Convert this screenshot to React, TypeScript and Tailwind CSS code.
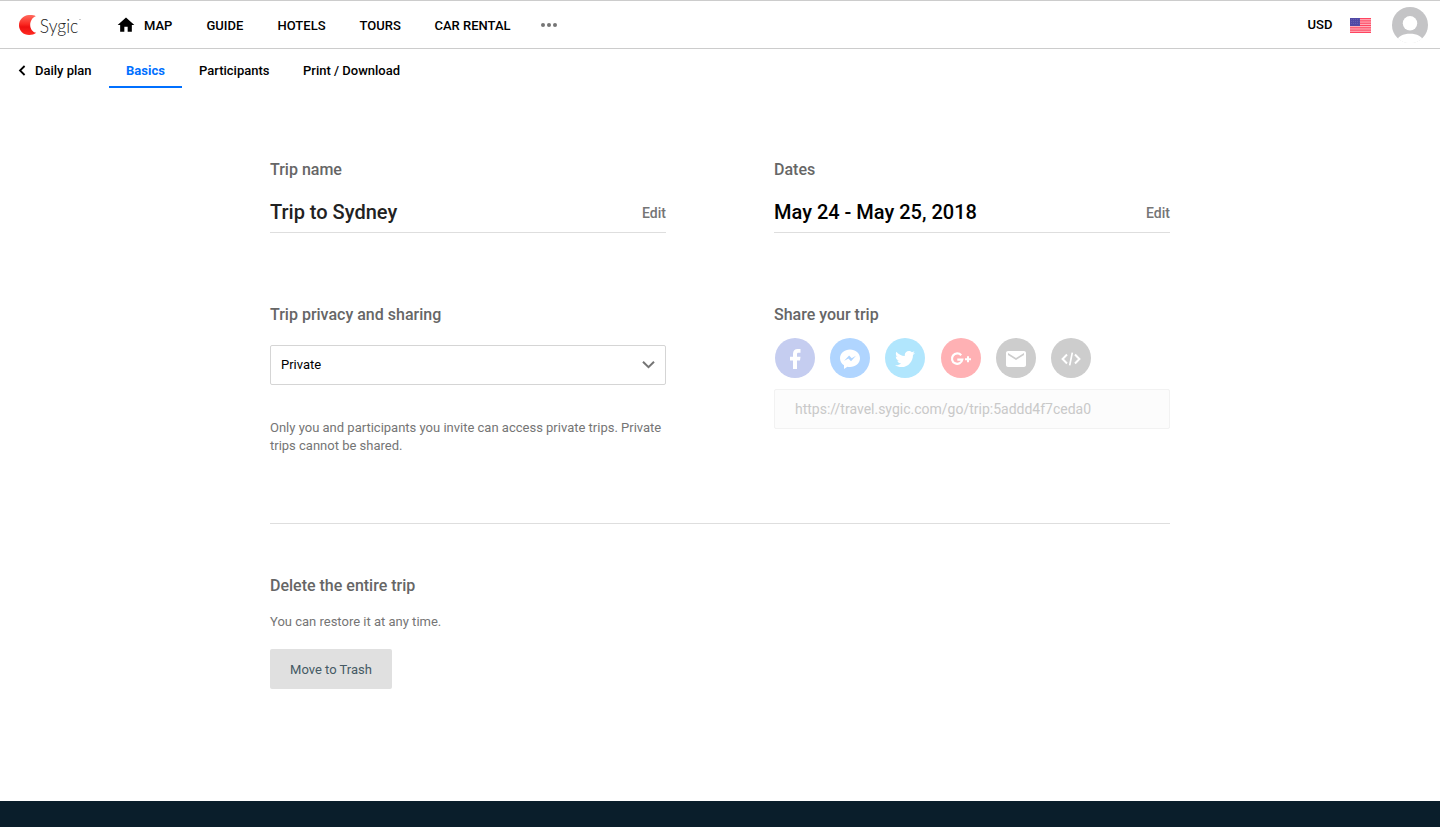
import React from "react";
import { MdHome, MdEmail } from "react-icons/md";
import { FaTwitter } from "react-icons/fa";

const NAV = [
  { label: "GUIDE", width: "w-[37px]" },
  { label: "HOTELS", width: "w-[48px]" },
  { label: "TOURS", width: "w-[41px]" },
  { label: "CAR RENTAL", width: "w-[77px]" },
];

function Logo() {
  return (
    <svg className="h-[28px] w-[66px] shrink-0" viewBox="0 0 66 28">
      <defs>
        <linearGradient id="moon" x1="0" y1="0" x2="0" y2="1">
          <stop offset="0" stopColor="#ff6a5e" />
          <stop offset="0.45" stopColor="#fb2a22" />
          <stop offset="0.6" stopColor="#ee1010" />
          <stop offset="1" stopColor="#ff2b22" />
        </linearGradient>
      </defs>
      <path d="M17.8 5.200C15.900 4.100 13.400 3.900 10.900 4.100C5.300 4.600 1 8.800 1 14.200C1 19.700 5.400 24 11.200 24C14 24 16.300 23.400 18.200 21.800C14.600 21.200 12.200 18 12.200 14C12.200 9.800 14.600 6.200 17.800 5.200Z" fill="url(#moon)" />
      <text x="21.800" y="21.700" fontFamily="Lato" fontWeight="300" fontSize="20" textLength="38.500" lengthAdjust="spacingAndGlyphs" fill="#222">Sygic</text>
      <circle cx="62" cy="8.500" r="0.600" fill="#888" />
    </svg>
  );
}

function Flag() {
  return (
    <svg className="h-[15px] w-[21px]" viewBox="0 0 21 15">
      <rect width="21" height="15" fill="#ffb5bf" />
      {[0, 2.310, 4.620, 6.920, 9.230, 11.540, 13.850].map((y) => (
        <rect key={y} y={y} width="21" height="1.150" fill="#ff4560" />
      ))}
      <rect width="10" height="8" fill="#5149a5" />
      {[1.5, 3.5, 5.5].map((y) => (
        <path key={y} d={`M1 ${y}H9.500`} stroke="#7771bb" strokeWidth="0.700" strokeDasharray="0.800 1.200" />
      ))}
    </svg>
  );
}

function Avatar() {
  return (
    <svg className="h-[36px] w-[36px]" viewBox="0 0 36 36">
      <defs>
        <clipPath id="disc"><circle cx="18" cy="18" r="18" /></clipPath>
      </defs>
      <g clipPath="url(#disc)">
        <rect width="36" height="36" fill="#c4c4c6" />
        <circle cx="18" cy="16.300" r="7.200" fill="#fff" />
        <path d="M3 37C5 29 11 26.700 18 26.700S31 29 33 37Z" fill="#fff" />
        <rect y="31.500" width="36" height="5" fill="#fff" />
      </g>
    </svg>
  );
}

function FacebookIcon() {
  return (
    <svg className="h-5 w-[11px]" viewBox="0 0 11 20">
      <path d="M3 20V11.500H0V7.800H3V5C3 1.800 4.800 0 7.600 0H10.500V3.700H8.500C7.400 3.700 7 4.200 7 5.200V7.800H10.500L10 11.500H7V20Z" fill="#fff" />
    </svg>
  );
}

function MessengerIcon() {
  return (
    <svg className="h-5 w-5" viewBox="0 0 20 20">
      <path d="M10 .5C4.500 .5 0 4.300 0 9.300C0 12.200 1.500 14.700 4 16.300V20L7.400 17.800C8.200 18 9.100 18.100 10 18.100C15.500 18.100 20 14.200 20 9.300S15.500 .5 10 .5Z" fill="#fff" />
      <path d="M4 12L9.100 6.600L11.700 9.200L16 6.800L11 12.200L8.400 9.600Z" fill="#b0d5ff" />
    </svg>
  );
}

function GooglePlusIcon() {
  return (
    <svg className="h-[14px] w-[22px]" viewBox="0 0 22 14" fill="none" stroke="#fff">
      <path d="M11.200 3.300A5.200 5.200 0 1 0 12.300 7.600H7.300" strokeWidth="2.200" />
      <path d="M18 4.200V10.200M15 7.200H21" strokeWidth="2" />
    </svg>
  );
}

function CodeIcon() {
  return (
    <svg className="h-[14px] w-5" viewBox="0 0 20 14" fill="none" stroke="#fff">
      <path d="M6 2.500L1.600 7L6 11.500M14 2.500L18.400 7L14 11.500" strokeWidth="2" />
      <path d="M11.300 .6L8.700 13.400" strokeWidth="1.700" />
    </svg>
  );
}

function ShareButton({ color, children }: { color: string; children: React.ReactNode }) {
  return (
    <button className={`flex size-10 items-center justify-center rounded-full pt-0.5 text-white ${color}`}>{children}</button>
  );
}

function Label({ children }: { children: React.ReactNode }) {
  return <h2 className="text-[16px] leading-5 font-medium text-[#666]">{children}</h2>;
}

function EditableField({ label, value, color }: { label: string; value: string; color: string }) {
  return (
    <section className="w-[396px]">
      <Label>{label}</Label>
      <div className="mt-[11px] flex h-[42px] items-center justify-between border-b border-[#dedede]">
        <span className={`pt-px text-[20px] leading-6 font-medium ${color}`}>{value}</span>
        <button className="pt-0.5 text-[14px] leading-5 font-medium text-[#757575]">Edit</button>
      </div>
    </section>
  );
}

export default function App() {
  return (
    <div className="flex h-[827px] w-[1440px] flex-col overflow-hidden bg-white font-['Roboto',sans-serif] text-[13px] text-black">
      <header className="flex h-[49px] shrink-0 items-center border-y border-[#ccc] pr-3 pl-[18px] font-medium">
        <Logo />
        <nav className="flex items-center whitespace-nowrap">
          <a className="mr-[33.5px] ml-[32px] flex w-[57px] items-center gap-2">
            <MdHome className="size-5 shrink-0" />
            <span className="pt-0.5">MAP</span>
          </a>
          <div className="flex gap-[34px] pt-0.5">
            {NAV.map((item) => (
              <a key={item.label} className={item.width}>{item.label}</a>
            ))}
          </div>
          <div className="ml-[29.5px] flex gap-[2px]">
            <span className="size-1 rounded-full bg-[#757575]" />
            <span className="size-1 rounded-full bg-[#757575]" />
            <span className="size-1 rounded-full bg-[#757575]" />
          </div>
        </nav>
        <div className="ml-auto flex items-center">
          <span className="mr-[17.5px] w-[25px] pt-px">USD</span>
          <div className="pt-px"><Flag /></div>
          <div className="ml-[21px]"><Avatar /></div>
        </div>
      </header>

      <nav className="flex h-[39px] shrink-0 pl-[14px] leading-[43px] font-medium whitespace-nowrap">
        <a className="flex w-[95px]">
          <svg className="mt-[16px] ml-1 h-[11px] w-[8px]" viewBox="0 0 8 11" fill="none" stroke="currentColor" strokeWidth="1.800">
            <path d="M6.600 1L2 5.500L6.600 10" />
          </svg>
          <span className="ml-[9px]">Daily plan</span>
        </a>
        <a className="w-[73px] border-b-2 border-[#0070ff] text-center font-bold text-[#0070ff]">Basics</a>
        <a className="w-[105px] pl-[17px]">Participants</a>
        <a className="pl-[16px]">Print / Download</a>
      </nav>

      <main className="mx-auto w-[900px] flex-1 pt-[72px]">
        <div className="flex justify-between">
          <EditableField label="Trip name" value="Trip to Sydney" color="text-[#222]" />
          <EditableField label="Dates" value="May 24 - May 25, 2018" color="text-black" />
        </div>

        <div className="mt-[72px] flex h-[219px] justify-between border-b border-[#dedede]">
          <section className="w-[396px]">
            <Label>Trip privacy and sharing</Label>
            <button className="mt-[20px] flex h-10 w-full items-center justify-between rounded-[2px] border border-[#d5d5d5] pr-2.5 pb-px pl-2.5">
              <span>Private</span>
              <svg className="h-[9px] w-[13px]" viewBox="0 0 13 9" fill="none" stroke="#757575" strokeWidth="2">
                <path d="M1 1.700L6.500 7.200L12 1.700" />
              </svg>
            </button>
            <p className="mt-[34px] leading-[18px] text-[#757575]">
              Only you and participants you invite can access private trips. Private<br />trips cannot be shared.
            </p>
          </section>
          <section className="w-[396px]">
            <Label>Share your trip</Label>
            <div className="mt-[13px] flex gap-[15.2px] pl-px">
              <ShareButton color="bg-[#c5cdf0]"><FacebookIcon /></ShareButton>
              <ShareButton color="bg-[#b0d5ff]"><MessengerIcon /></ShareButton>
              <ShareButton color="bg-[#b1e6fd]"><FaTwitter className="size-5" /></ShareButton>
              <ShareButton color="bg-[#ffb1b4]"><GooglePlusIcon /></ShareButton>
              <ShareButton color="bg-[#cdcdcd]"><MdEmail className="size-6" /></ShareButton>
              <ShareButton color="bg-[#cdcdcd]"><CodeIcon /></ShareButton>
            </div>
            <div className="mt-[11px] flex h-10 items-center rounded-[2px] border border-[#f2f2f2] bg-[#fcfcfc] pl-5 text-[14px] text-[#c9c9c9]">
              https://travel.sygic.com/go/trip:5addd4f7ceda0
            </div>
          </section>
        </div>

        <section className="pt-[52px]">
          <Label>Delete the entire trip</Label>
          <p className="mt-[17px] leading-[18px] text-[#757575]">You can restore it at any time.</p>
          <button className="mt-[18px] h-10 w-[122px] rounded-[2px] bg-[#e0e0e0] pt-0.5 text-[#455a64]">Move to Trash</button>
        </section>
      </main>

      <footer className="h-[26px] shrink-0 bg-[#0a1e2b]" />
    </div>
  );
}
